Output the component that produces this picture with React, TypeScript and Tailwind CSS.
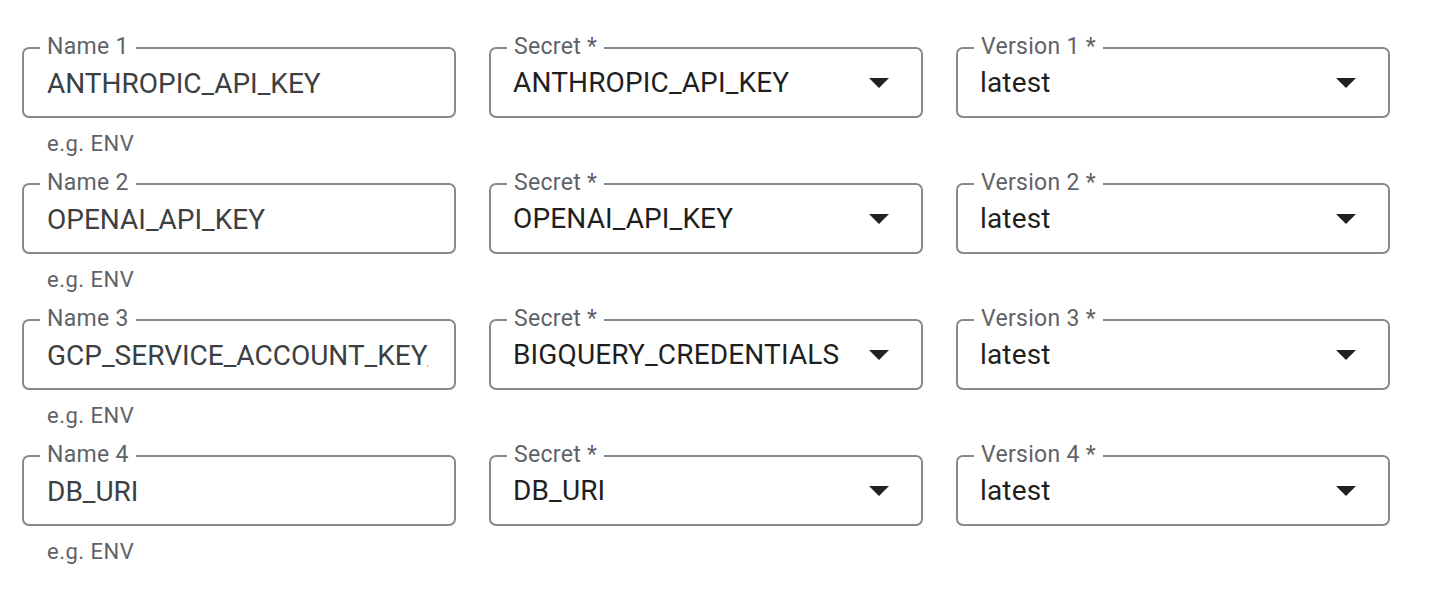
import React from "react";

type Row = { n: number; name: string; secret: string; version: string };

const rows: Row[] = [
  { n: 1, name: "ANTHROPIC_API_KEY", secret: "ANTHROPIC_API_KEY", version: "latest" },
  { n: 2, name: "OPENAI_API_KEY", secret: "OPENAI_API_KEY", version: "latest" },
  { n: 3, name: "GCP_SERVICE_ACCOUNT_KEY_JSON", secret: "BIGQUERY_CREDENTIALS", version: "latest" },
  { n: 4, name: "DB_URI", secret: "DB_URI", version: "latest" },
];

function Arrow() {
  return (
    <svg width="20" height="10" viewBox="0 0 20 10" className="shrink-0">
      <path d="M0 0 L20 0 L10 10 Z" fill="#202124" />
    </svg>
  );
}

function Outlined({
  label,
  children,
}: {
  label: string;
  children: React.ReactNode;
}) {
  return (
    <div className="relative h-[71px] w-[434px] rounded-[7px] border-[2px] border-[#868a8f] bg-white">
      <span className="absolute left-[16px] top-[-17px] bg-white px-[7px] text-[23px] leading-[30px] tracking-[0.3px] text-[#5f6368]">
        {label}
      </span>
      {children}
    </div>
  );
}

function TextField({ label, value }: { label: string; value: string }) {
  return (
    <div className="flex flex-col">
      <Outlined label={label}>
        <input
          readOnly
          value={value}
          className="h-full w-full bg-transparent pl-[23px] pr-[26px] pt-[2px] text-[28px] text-[#3c4043] outline-none"
          style={{ fontFamily: "Roboto, sans-serif" }}
        />
      </Outlined>
      <div className="pl-[25px] pt-[12px] text-[22px] leading-[28px] tracking-[0.5px] text-[#5f6368]">
        e.g. ENV
      </div>
    </div>
  );
}

function SelectField({ label, value }: { label: string; value: string }) {
  return (
    <Outlined label={label}>
      <div className="flex h-full items-center pl-[22px] pr-[32px] pt-[1px]">
        <span className="flex-1 truncate text-[28px] tracking-[0.15px] text-[#1f1f1f]">{value}</span>
        <Arrow />
      </div>
    </Outlined>
  );
}

export default function App() {
  return (
    <div
      className="min-h-[594px] w-[1444px] bg-white pl-[22px] pt-[47px]"
      style={{ fontFamily: "Roboto, 'Noto Sans', sans-serif" }}
    >
      <div className="flex flex-col">
        {rows.map((r) => (
          <div key={r.n} className="flex h-[136px] items-start gap-[33px]">
            <TextField label={`Name ${r.n}`} value={r.name} />
            <SelectField label="Secret *" value={r.secret} />
            <SelectField label={`Version ${r.n} *`} value={r.version} />
          </div>
        ))}
      </div>
    </div>
  );
}
